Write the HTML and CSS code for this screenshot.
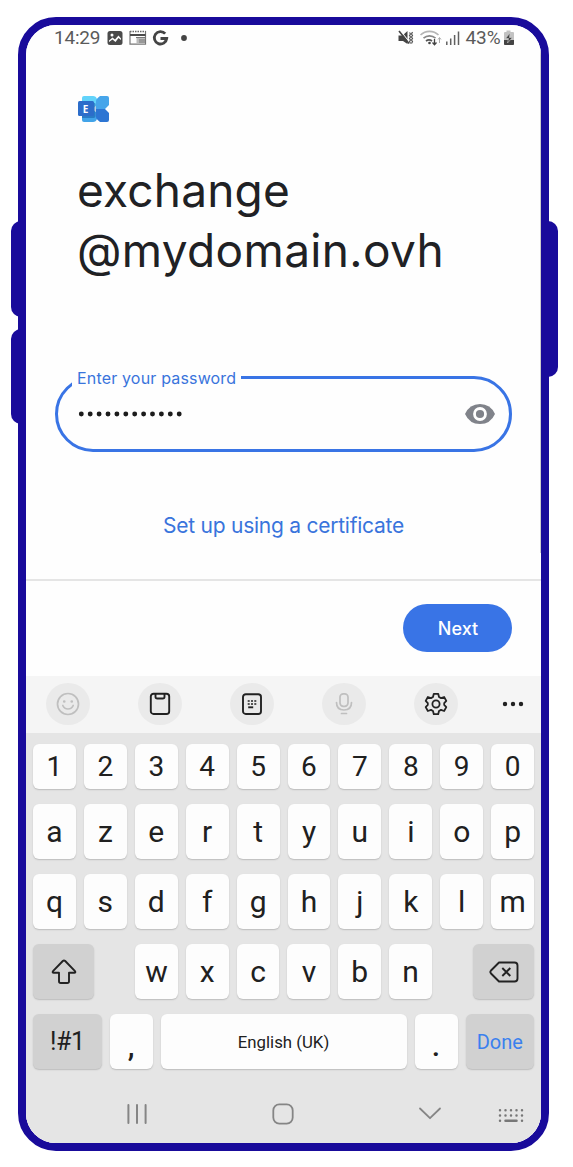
FILE: index.html
```html
<!DOCTYPE html>
<html lang="en">
<head>
<meta charset="utf-8">
<title>Enter your password</title>
<link rel="stylesheet" href="styles.css">
</head>
<body>
<div class="phone">
  <span class="side side-up"></span>
  <span class="side side-down"></span>
  <span class="side side-power"></span>
  <div class="screen">
    <span class="scrollbar"></span>
    <header class="status">
      <span class="clock">14:29</span>
      <svg class="notices" width="84" height="18" viewBox="0 0 84 18">
        <rect x="2.500" y="2" width="15" height="14" rx="2.500" fill="#4a4a4a"/>
        <circle cx="7" cy="6" r="1.500" fill="#fff"/>
        <path d="M4 13V11.500L7.500 8.500L10 10.500L13.500 6.500L16 9.500V11L13.500 9L10.500 13L7.500 10.500Z" fill="#fff"/>
        <path d="M25 2v13.200h15.500V2" fill="none" stroke="#777" stroke-width="1.200"/>
        <path d="M25 2.500h15.500" stroke="#666" stroke-width="1.500" stroke-dasharray="1.500 1"/>
        <path d="M25 6h15.500" stroke="#4a4a4a" stroke-width="2"/>
        <path d="M31.500 8.200h8.500v6.500H31.500" fill="#bbb"/>
        <path d="M31 8.500h9M34 11h6M34 13h6" stroke="#777" stroke-width="1"/>
        <path d="M60.200 4.700A6.200 6.200 0 1 0 61.700 9.500H55.500" fill="none" stroke="#444" stroke-width="2.800"/>
        <circle cx="79" cy="9" r="2.900" fill="#444"/>
      </svg>
      <svg class="signals" width="66" height="18" viewBox="0 0 66 18">
        <path d="M.5 6.500h4l5-4.500v13L5 12H.5Z" fill="#444"/>
        <path d="M2.200 1.500l9.500 12" stroke="#fff" stroke-width="1.200"/>
        <path d="M1 2l10 12.500" stroke="#444" stroke-width="1.600"/>
        <path d="M11.500 3.500l1 1.500-1 1.500 1 1.500-1 1.500 1 1.500-1 1.500 1 2M14.500 3l-1 2 1 1.500-1 1.500 1 1.500-1 1.500 1 1.500-1 2" fill="none" stroke="#555" stroke-width="1.200"/>
        <path d="M22.500 6a13 13 0 0 1 18 0" fill="none" stroke="#b5b5b5" stroke-width="1.700"/>
        <path d="M25.500 9.200a9 9 0 0 1 12 0" fill="none" stroke="#888" stroke-width="1.700"/>
        <path d="M28 12a5 5 0 0 1 6 0" fill="none" stroke="#555" stroke-width="1.700"/>
        <circle cx="31.500" cy="14" r="1.300" fill="#444"/>
        <path d="M36.500 10v5.500M34.500 13.500l2 2.300l2-2.300" fill="none" stroke="#444" stroke-width="1.300"/>
        <path d="M41.500 14V9M40 10.500l1.500-2l1.500 2" fill="none" stroke="#aaa" stroke-width="1"/>
        <path d="M48.800 12.500V16M52.700 9.500V16M56.600 6V16M60.500 2.500V16" stroke="#606060" stroke-width="1.500"/>
      </svg>
      <span class="percent">43%</span>
      <svg class="battery" width="12" height="18" viewBox="0 0 12 18">
        <path d="M3.500 3V1.500h4V3h2.500q1 0 1 1V15q0 1-1 1H2q-1 0-1-1V4q0-1 1-1Z" fill="#c2c2c2"/>
        <path d="M1 11h10v4q0 1-1 1H2q-1 0-1-1Z" fill="#444"/>
        <path d="M7 4L2.500 9.500H5.500L4.500 14L9.500 8.500H6.500Z" fill="#444" stroke="#d0d0d0" stroke-width=".6"/>
      </svg>
    </header>

    <main class="content">
      <svg class="logo" width="32" height="28" viewBox="0 0 32 28">
        <path d="M6 1h9q3 0 4 3v6L14 14H4V3q0-2 2-2Z" fill="#62d3fa"/>
        <path d="M4 14h10l5 4v6q-1 3-4 3H6q-2 0-2-2Z" fill="#41a3e8"/>
        <path d="M22 1h7q2 0 2 2v7l-4 4H18V6q0-2 4-5Z" fill="#46a5ea"/>
        <path d="M18 14h9l4 4v7q0 2-2 2h-7q-4-3-4-5Z" fill="#2d75d3"/>
        <path d="M4 8h12.500q1 0 1 1v12q0 2-2 2H4Z" fill="#1760af" opacity=".6"/>
        <rect x="0" y="6" width="16" height="15" rx="1.500" fill="#2c6dca"/>
        <text class="logo-letter" x="4.700" y="17.500">E</text>
      </svg>
      <h1 class="title"><span class="title-name">exchange</span><span class="title-domain">@mydomain.ovh</span></h1>

      <div class="field">
        <span class="label">Enter your password</span>
        <svg class="bullets" width="108" height="8" viewBox="0 0 108 8">
          <path d="M3.300 4h98" stroke="#1c1c1c" stroke-width="4.900" stroke-linecap="round" stroke-dasharray="0 8.900"/>
        </svg>
        <svg class="eye" width="30" height="20" viewBox="0 0 30 20">
          <path d="M0 10Q4.500 0 15 0T30 10Q25.500 20 15 20T0 10Z" fill="#80838a"/>
          <circle cx="15" cy="10" r="5.500" fill="#80838a" stroke="#fff" stroke-width="2.800"/>
        </svg>
      </div>

      <a class="certificate">Set up using a certificate</a>
    </main>

    <footer class="actions"><button class="next">Next</button></footer>

    <div class="toolbar">
      <span class="tool"><svg width="26" height="26" viewBox="0 0 26 26" fill="none" stroke="#bfbfbf" stroke-width="1.700" stroke-linecap="round"><circle cx="13" cy="13" r="10.500"/><path d="M7.800 14.500q1.500 3.500 5.200 3.500t5.200-3.500"/><path d="M9.200 10.500h.1M16.700 10.500h.1" stroke-width="2.600"/></svg></span>
      <span class="tool"><svg width="26" height="26" viewBox="0 0 26 26" fill="none" stroke="#222" stroke-width="1.900"><rect x="3.800" y="2.700" width="18.400" height="20.300" rx="2.800"/><path d="M8.500 2.700v3q0 1.800 1.800 1.800h5.400q1.800 0 1.800-1.800v-3"/></svg></span>
      <span class="tool"><svg width="26" height="26" viewBox="0 0 26 26" fill="none" stroke="#222" stroke-width="1.900"><rect x="4" y="3.200" width="18" height="19.800" rx="2.800"/><path d="M8.700 10h9M8.700 13h9" stroke-dasharray="2 1.300" stroke-width="1.700"/><path d="M9.200 16.300h5"/></svg></span>
      <span class="tool"><svg width="26" height="26" viewBox="0 0 26 26" fill="none" stroke="#bfbfbf" stroke-width="1.700" stroke-linecap="round"><rect x="9" y="2.800" width="8" height="12.500" rx="3.300"/><path d="M5.500 11.500q0 7.500 7.500 7.500t7.500-7.500M10.500 22.500h5"/></svg></span>
      <span class="tool"><svg width="26" height="26" viewBox="0 0 26 26" fill="none" stroke="#222" stroke-width="1.800" stroke-linejoin="round"><path d="M10.800 2.800h4.400l.8 3.200 2 1.100 3.100-1.100 2.200 3.900-2.100 2.200v1.800l2.100 2.200-2.200 3.900-3.100-1.100-2 1.100-.8 3.200h-4.400L10 20l-2-1.100L4.900 20l-2.200-3.900 2.100-2.200v-1.800L2.700 9.900 4.900 6 8 7.100 10 6Z"/><circle cx="13" cy="13" r="3.600"/></svg></span>
      <svg class="more" width="24" height="8" viewBox="0 0 24 8"><path d="M4 4h.01M12 4h.01M20 4h.01" stroke="#222" stroke-width="4.400" stroke-linecap="round"/></svg>
    </div>

    <div class="keyboard">
      <div class="row row-digits">
        <span class="key">1</span><span class="key">2</span><span class="key">3</span><span class="key">4</span><span class="key">5</span><span class="key">6</span><span class="key">7</span><span class="key">8</span><span class="key">9</span><span class="key">0</span>
      </div>
      <div class="row">
        <span class="key">a</span><span class="key">z</span><span class="key">e</span><span class="key">r</span><span class="key">t</span><span class="key">y</span><span class="key">u</span><span class="key">i</span><span class="key">o</span><span class="key">p</span>
      </div>
      <div class="row">
        <span class="key">q</span><span class="key">s</span><span class="key">d</span><span class="key">f</span><span class="key">g</span><span class="key">h</span><span class="key">j</span><span class="key">k</span><span class="key">l</span><span class="key">m</span>
      </div>
      <div class="row row-split">
        <span class="key dark side-key"><svg width="28" height="28" viewBox="0 0 28 28" fill="none" stroke="#222" stroke-width="1.900" stroke-linejoin="round"><path d="M12.800 3L3 13.200q-1 1.500.7 1.500H9v8.500q0 1.800 1.800 1.800h6.400q1.800 0 1.800-1.800v-8.500h5.300q1.700 0 .7-1.500L15.200 3q-1.200-1.200-2.400 0Z"/></svg></span>
        <div class="middle"><span class="key">w</span><span class="key">x</span><span class="key">c</span><span class="key">v</span><span class="key">b</span><span class="key">n</span></div>
        <span class="key dark side-key"><svg width="30" height="24" viewBox="0 0 30 24" fill="none" stroke="#222" stroke-width="1.900" stroke-linejoin="round"><path d="M10 2.500H25.500q3 0 3 3v13q0 3-3 3H10L2 13.500q-1.300-1.500 0-3Z"/><path d="M13.300 8l8 8M21.300 8l-8 8"/></svg></span>
      </div>
      <div class="row">
        <span class="key dark wide symbols">!#1</span><span class="key mark">,</span><span class="key space">English (UK)</span><span class="key mark">.</span><span class="key dark wide done">Done</span>
      </div>
      <nav class="nav">
        <svg width="22" height="22" viewBox="0 0 22 22" stroke="#858585" stroke-width="2" stroke-linecap="round"><path d="M2.400 2v18M11 2v18M19.600 2v18"/></svg>
        <svg width="22" height="22" viewBox="0 0 22 22" fill="none" stroke="#858585" stroke-width="1.800"><rect x="1.300" y="1.400" width="19.400" height="19.200" rx="6"/></svg>
        <svg width="24" height="22" viewBox="0 0 24 22" fill="none" stroke="#858585" stroke-width="1.800" stroke-linecap="round" stroke-linejoin="round"><path d="M2 5.500l10 9.700 10-9.700"/></svg>
        <svg class="switcher" width="26" height="22" viewBox="0 0 26 22" stroke="#777" stroke-width="2.500" stroke-linecap="round"><path d="M2 7.300h22.500M2 12.500h22.500M2 17.700h.01M24 17.700h.01" stroke-dasharray="0 5.500"/><path d="M7.500 17.700h11"/></svg>
      </nav>
    </div>
  </div>
</div>
</body>
</html>
```
FILE: styles.css
```css
* { box-sizing: border-box; }
body { margin: 0; padding: 17px 0 0 18px; height: 1167px; background: #fff; overflow: hidden; font-family: Inter, sans-serif; }
.phone { position: relative; width: 531px; height: 1134px; border: 8px solid #190b9b; border-radius: 38px; }
.side { position: absolute; background: #190b9b; }
.side-up { left: -15px; top: 196px; width: 12px; height: 96px; border-radius: 10px 0 0 10px; }
.side-down { left: -15px; top: 304px; width: 12px; height: 95px; border-radius: 10px 0 0 10px; }
.side-power { right: -17px; top: 196px; width: 14px; height: 156px; border-radius: 0 10px 10px 0; }
.screen { position: relative; display: flex; flex-direction: column; width: 515px; height: 1118px; overflow: hidden; border-radius: 30px; background: #fefefe; }
.scrollbar { position: absolute; right: 0; top: 26px; width: 1.500px; height: 502px; background: #ccc; }
.status { display: flex; align-items: center; height: 26px; padding: 0 26px 0 28px; color: #5a5a5a; font: 400 19px/26px Roboto, sans-serif; }
.clock { width: 49px; letter-spacing: -.2px; }
.notices { margin-left: 2px; }
.signals { margin-left: auto; }
.percent { width: 37.500px; margin-left: 2px; letter-spacing: -.1px; }
.content { display: flex; flex-direction: column; height: 528px; padding: 44px 29px 0; }
.logo { flex: none; margin-left: 23px; }
.logo-letter { fill: #fff; font: 700 10px "Open Sans", sans-serif; }
.title { display: flex; flex-direction: column; margin: 37px 0 0 22px; color: #202124; font-size: 46px; line-height: 60px; font-weight: 400; }
.title-name { letter-spacing: .2px; }
.title-domain { letter-spacing: .35px; }
.field { position: relative; display: flex; align-items: center; justify-content: space-between; flex: none; height: 76px; margin-top: 96px; padding: 0 14.500px 0 20px; border: 3px solid #3974e5; border-radius: 38px; }
.label { position: absolute; left: 14px; top: -12px; width: 169px; padding-left: 5px; background: #fefefe; color: #3974dc; font-size: 16px; line-height: 22px; letter-spacing: .17px; white-space: nowrap; }
.certificate { align-self: center; margin-top: 60px; color: #3974dc; font-size: 21px; line-height: 28px; letter-spacing: -.25px; white-space: nowrap; }
.actions { display: flex; justify-content: flex-end; align-items: flex-start; height: 97px; padding: 23px 29px 0; border-top: 2px solid #e5e5e5; }
.next { width: 109px; height: 48px; padding: 1px 0 0 1px; border: 0; border-radius: 24px; background: #3974e6; color: #fff; font: 500 18px/46px Inter, sans-serif; }
.toolbar { display: flex; align-items: center; gap: 48.500px; height: 57px; padding: 0 0 2px 20px; background: #f5f5f5; }
.tool { display: flex; align-items: center; justify-content: center; flex: none; width: 43.500px; height: 42px; border-radius: 50%; background: #eaeaea; }
.more { margin: 1px 0 0 -5px; }
.keyboard { display: flex; flex-direction: column; flex: 1; gap: 15px; padding: 10.500px 7px 0; background: #e5e5e5; }
.row { display: flex; gap: 8px; flex: none; height: 55px; }
.row-digits { height: 45.500px; }
.row-digits .key { padding-top: 2px; font-size: 28px; }
.row-split { justify-content: space-between; }
.middle { display: flex; gap: 8px; width: 297px; }
.key { display: flex; align-items: center; justify-content: center; flex: 1 1 0; min-width: 0; padding-top: 1px; border-radius: 6px; background: #fdfdfd; box-shadow: 0 1px 1.500px #bbb; color: #202020; font: 400 30px/1 Roboto, sans-serif; }
.dark { background: #d1d1d1; }
.side-key { flex: none; width: 61px; padding-top: 0; }
.wide { flex: none; width: 68.500px; }
.symbols { padding-top: 0; font-size: 25px; letter-spacing: -.5px; }
.space { flex: none; width: 246px; padding-top: 2px; font-size: 16.800px; }
.mark { padding-top: 8px; font-weight: 500; }
.done { color: #3a80ee; font-size: 20px; }
.nav { display: flex; align-items: center; gap: 124px; height: 22px; margin-top: 19px; padding-left: 93px; }
.nav svg { flex: none; }
.switcher { margin-left: -68px; }
```
